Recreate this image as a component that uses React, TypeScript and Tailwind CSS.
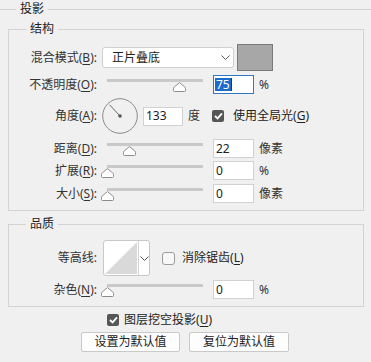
import React from 'react';

const Key = ({ c }: { c: string }) => (
  <>
    (<u className="underline-offset-[2px]">{c}</u>)
  </>
);

const Label = ({ text, k }: { text: string; k?: string }) => (
  <div className="w-[88px] shrink-0 text-right text-[#333]">
    {text}
    {k && <Key c={k} />}:
  </div>
);

const Slider = ({ pos }: { pos: number }) => (
  <div className="relative ml-[4px] mt-[2px] h-[13px] w-[108px] shrink-0">
    <div className="absolute left-[6px] top-0 h-[3px] w-[96px] bg-[#c9c9c9]" />
    <svg className="absolute top-[3px]" style={{ left: pos }} width="13" height="10" viewBox="0 0 13 10">
      <path
        d="M6.5 0.6 L11.8 5 Q12.5 5.6 12.5 6.4 V8.5 Q12.5 9.5 11.5 9.5 H1.5 Q0.5 9.5 0.5 8.5 V6.4 Q0.5 5.6 1.2 5 Z"
        fill="#fff"
        stroke="#8c8c8c"
      />
    </svg>
  </div>
);

const NumBox = ({ value }: { value: string }) => (
  <div className="ml-[4px] flex h-[19px] w-[41px] shrink-0 items-center border border-[#d2d2d2] bg-white pl-[2px] text-[#222]">
    {value}
  </div>
);

const Unit = ({ text }: { text: string }) => <div className="ml-[5px] text-[#333]">{text}</div>;

const Check = ({ on }: { on?: boolean }) =>
  on ? (
    <div className="flex h-[12px] w-[12px] shrink-0 items-center justify-center rounded-[2px] bg-[#565656]">
      <svg width="9" height="8" viewBox="0 0 9 8">
        <path d="M1 4 L3.6 6.4 L8 1.4" stroke="#fff" strokeWidth="1.8" fill="none" />
      </svg>
    </div>
  ) : (
    <div className="h-[13px] w-[13px] shrink-0 rounded-[3px] border border-[#9c9c9c] bg-[#f8f8f8]" />
  );

const Chevron = () => (
  <svg width="9" height="5" viewBox="0 0 9 5">
    <path d="M0.5 0.5 L4.5 4.5 L8.5 0.5" stroke="#555" fill="none" />
  </svg>
);

const Group = ({ title, className, children }: { title: string; className?: string; children: React.ReactNode }) => (
  <fieldset className={`border border-[#d3d3d3] ${className ?? ''}`}>
    <legend className="ml-[17px] px-[4px] leading-[18px] text-[#222]">{title}</legend>
    {children}
  </fieldset>
);

const SliderRow = ({ label, k, pos, value, unit, className }: { label: string; k: string; pos: number; value: string; unit: string; className?: string }) => (
  <div className={`flex h-[19px] items-center ${className ?? ''}`}>
    <Label text={label} k={k} />
    <Slider pos={pos} />
    <NumBox value={value} />
    <Unit text={unit} />
  </div>
);

export default function App() {
  return (
    <div className="h-[362px] w-[371px] overflow-hidden bg-[#f0f0f0] font-['Noto_Sans','Noto_Sans_CJK_SC',sans-serif] text-[12px] leading-[16px]">
      <fieldset className="border-t border-[#d3d3d3]">
        <legend className="ml-[16px] px-[4px] leading-[18px] text-[#222]">投影</legend>
        <div className="pl-[8px] pr-[7px]">
          <Group title="结构" className="mt-[2px]">
            <div className="pb-[7px] pt-[6px]">
              <div className="flex h-[27px] items-center">
                <Label text="混合模式" k="B" />
                <div className="ml-[5px] flex h-[21px] w-[132px] items-center justify-between rounded-[3px] border border-[#d0d0d0] bg-white pl-[9px] pr-[3px] text-[#222]">
                  <span>正片叠底</span>
                  <Chevron />
                </div>
                <div className="ml-[3px] h-[27px] w-[36px] border border-[#7a7a7a] bg-[#a7a7a7]" />
              </div>

              <div className="mt-[4px] flex h-[19px] items-center">
                <Label text="不透明度" k="O" />
                <Slider pos={72} />
                <div className="ml-[4px] flex h-[19px] w-[41px] items-center border border-[#2f78c8] bg-white pl-[1px]">
                  <span className="bg-[#1c6ccc] px-[1px] leading-[13px] text-white">75</span>
                  <span className="h-[13px] w-px bg-[#333]" />
                </div>
                <Unit text="%" />
              </div>

              <div className="mt-[4px] flex h-[36px] items-center">
                <Label text="角度" k="A" />
                <svg className="ml-[5px] shrink-0" width="36" height="36" viewBox="0 0 36 36">
                  <circle cx="18" cy="18" r="17.3" fill="none" stroke="#8a8a8a" />
                  <line x1="18" y1="18" x2="7.6" y2="6.8" stroke="#6a6a6a" />
                  <circle cx="18" cy="18" r="1.8" fill="#555" />
                </svg>
                <div className="ml-[5px] flex h-[19px] w-[40px] items-center border border-[#d2d2d2] bg-white pl-[2px] text-[#222]">
                  133
                </div>
                <div className="ml-[5px] text-[#333]">度</div>
                <div className="ml-[12px]">
                  <Check on />
                </div>
                <div className="ml-[9px] text-[#222]">
                  使用全局光<Key c="G" />
                </div>
              </div>

              <SliderRow className="mt-[5px]" label="距离" k="D" pos={22} value="22" unit="像素" />
              <SliderRow className="mt-[3px]" label="扩展" k="R" pos={0} value="0" unit="%" />
              <SliderRow className="mt-[4px]" label="大小" k="S" pos={0} value="0" unit="像素" />
            </div>
          </Group>

          <Group title="品质" className="mt-[4px]">
            <div className="pb-[7px] pt-[7px]">
              <div className="flex h-[36px] items-center">
                <Label text="等高线" />
                <div className="ml-[6px] flex h-[36px] w-[47px] overflow-hidden rounded-[3px] border border-[#c8c8c8] bg-white">
                  <div className="h-full w-[34px] p-[1px]">
                    <svg width="32" height="32" viewBox="0 0 32 32">
                      <polygon points="0,32 32,0 32,32" fill="#d9d9d9" />
                    </svg>
                  </div>
                  <div className="flex flex-1 items-center justify-center border-l border-[#d3d3d3]">
                    <Chevron />
                  </div>
                </div>
                <div className="ml-[12px]">
                  <Check />
                </div>
                <div className="ml-[7px] text-[#222]">
                  消除锯齿<Key c="L" />
                </div>
              </div>
              <SliderRow className="mt-[4px]" label="杂色" k="N" pos={0} value="0" unit="%" />
            </div>
          </Group>

          <div className="mt-[6px] flex h-[13px] items-center pl-[99px]">
            <Check on />
            <div className="ml-[5px] text-[#222]">
              图层挖空投影<Key c="U" />
            </div>
          </div>

          <div className="mt-[6px] flex gap-[9px] pl-[73px]">
            <button className="h-[20px] w-[99px] rounded-[2px] border border-[#c9c9c9] bg-[#fdfdfd] text-[#222]">
              设置为默认值
            </button>
            <button className="h-[20px] w-[100px] rounded-[2px] border border-[#c9c9c9] bg-[#fdfdfd] text-[#222]">
              复位为默认值
            </button>
          </div>
        </div>
      </fieldset>
    </div>
  );
}
